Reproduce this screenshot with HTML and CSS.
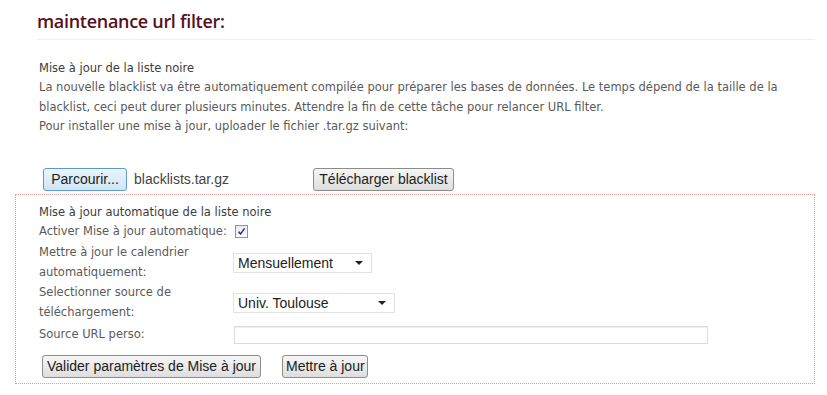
FILE: index.html
```html
<!DOCTYPE html>
<html lang="fr">
<head>
<meta charset="utf-8">
<title>maintenance url filter</title>
<link rel="stylesheet" href="styles.css">
</head>
<body>
<div class="page">
  <h1 class="title">maintenance url filter:</h1>
  <div class="rule"></div>
  <section class="intro">
    <p class="heading">Mise à jour de la liste noire</p>
    <p>La nouvelle blacklist va être automatiquement compilée pour préparer les bases de données. Le temps dépend de la taille de la blacklist, ceci peut durer plusieurs minutes. Attendre la fin de cette tâche pour relancer URL filter.</p>
    <p>Pour installer une mise à jour, uploader le fichier .tar.gz suivant:</p>
  </section>
  <div class="upload-row">
    <button class="btn btn-browse" type="button">Parcourir...</button>
    <span class="file-name">blacklists.tar.gz</span>
    <button class="btn btn-download" type="button">Télécharger blacklist</button>
  </div>
  <div class="auto-box">
    <p class="heading">Mise à jour automatique de la liste noire</p>
    <div class="form-grid">
      <label class="lbl">Activer Mise à jour automatique:</label>
      <div class="ctl"><span class="checkbox"><svg width="9" height="9" viewBox="0 0 9 9"><path d="M1.5 4.6 L3.6 7 L7.6 1.4" fill="none" stroke="#2b3f8f" stroke-width="1.6"/></svg></span></div>

      <label class="lbl row-3">Mettre à jour le calendrier automatiquement:</label>
      <div class="ctl row-3"><span class="select select-1">Mensuellement<span class="arrow"></span></span></div>

      <label class="lbl row-4">Selectionner source de téléchargement:</label>
      <div class="ctl row-4"><span class="select select-2">Univ. Toulouse<span class="arrow"></span></span></div>

      <label class="lbl row-5">Source URL perso:</label>
      <div class="ctl row-5"><span class="text-input"></span></div>
    </div>
    <div class="actions">
      <button class="btn btn-validate" type="button">Valider paramètres de Mise à jour</button>
      <button class="btn btn-update" type="button">Mettre à jour</button>
    </div>
  </div>
</div>
</body>
</html>
```
FILE: styles.css
```css
html, body {
  margin: 0;
  padding: 0;
  background: #ffffff;
}
body {
  font-family: "DejaVu Sans", Verdana, sans-serif;
  font-size: 11.5px;
  color: #5a5a5a;
}
.page {
  padding: 0 12px 0 15px;
}
.title {
  margin: 0;
  padding: 9px 0 0 22px;
  font-family: "Open Sans", "DejaVu Sans", sans-serif;
  font-weight: 600;
  font-size: 18px;
  line-height: 25px;
  color: #561020;
  letter-spacing: -0.3px;
}
.rule {
  margin: 5px 0 0 22px;
  height: 1px;
  background: #f0f0f0;
}
.intro {
  padding: 19px 0 0 24px;
}
.intro p, .auto-box p {
  margin: 0;
  line-height: 19.4px;
}
.intro p:not(.heading) {
  padding-right: 30px;
}
.heading {
  color: #3c3c3c;
}
.upload-row {
  display: flex;
  align-items: center;
  padding: 31px 0 0 28px;
  height: 23px;
}
.btn {
  font-family: "Liberation Sans", Arial, sans-serif;
  font-size: 14px;
  color: #222222;
  height: 23px;
  padding: 0 3px;
  border: 1px solid #8c8c8c;
  border-radius: 3px;
  background: linear-gradient(#f6f6f6, #dedede);
  line-height: 21px;
  box-sizing: border-box;
  white-space: nowrap;
}
.btn-browse {
  width: 84px;
  border-color: #5d9ac5;
  background: linear-gradient(#eaf4fb, #cfe5f5);
}
.file-name {
  font-family: "Liberation Sans", Arial, sans-serif;
  font-size: 14px;
  color: #444444;
  margin-left: 7px;
  width: 179px;
}
.btn-download {
  width: 141px;
}
.auto-box {
  margin-top: 3px;
  border: 1px dotted #e29a9a;
  width: 800px;
  box-sizing: border-box;
  height: 190px;
  padding: 8px 0 0 23px;
}
.form-grid {
  display: grid;
  grid-template-columns: 194px auto;
  align-items: center;
}
.lbl {
  line-height: 19.4px;
}
.row-3 { padding-top: 2px; }
.row-4 { padding-top: 1px; }
.row-5 { padding-top: 3px; }
.ctl {
  display: flex;
  align-items: center;
}
.checkbox {
  width: 11px;
  height: 11px;
  border: 1px solid #8e8fb3;
  background: linear-gradient(#e6e8f5, #ffffff);
  display: flex;
  align-items: center;
  justify-content: center;
  margin-left: 2px;
}
.select {
  position: relative;
  display: flex;
  align-items: center;
  height: 20px;
  box-sizing: border-box;
  border: 1px solid #e2e2e2;
  background: #ffffff;
  font-family: "Liberation Sans", Arial, sans-serif;
  font-size: 14px;
  color: #222222;
  padding-left: 4px;
}
.select-1 { width: 139px; }
.select-2 { width: 162px; }
.arrow {
  position: absolute;
  right: 8px;
  top: 7px;
  width: 0;
  height: 0;
  border-left: 4px solid transparent;
  border-right: 4px solid transparent;
  border-top: 4.5px solid #222;
}
.text-input {
  display: block;
  width: 474px;
  height: 18px;
  margin: 0 0 0 1px;
  border: 1px solid #dcdcdc;
  box-shadow: inset 0 1px 1px #eeeeee;
  box-sizing: border-box;
}
.actions {
  display: flex;
  gap: 21px;
  padding: 11px 0 0 3px;
}
.btn-validate { width: 219px; }
.btn-update { width: 86px; }
```
